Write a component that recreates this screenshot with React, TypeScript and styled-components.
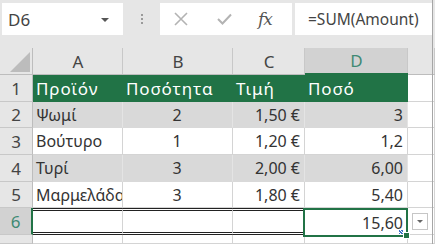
import React from "react";
import styled, { createGlobalStyle, css } from "styled-components";

const GlobalStyle = createGlobalStyle`
  html, body { margin: 0; padding: 0; background: #e6e6e6; }
  body { font-family: "Noto Sans", "Open Sans", sans-serif; }
`;

const Frame = styled.div`
  width: 435px;
  height: 244px;
  overflow: hidden;
  background: #e6e6e6;
  display: flex;
  flex-direction: column;
  position: relative;
`;

const TopBar = styled.div`
  height: 48px;
  flex: none;
  display: flex;
  align-items: flex-start;
  padding: 3px 0 0 2px;
  box-sizing: border-box;
`;

const NameBox = styled.div`
  width: 121px;
  height: 32px;
  background: #fff;
  display: flex;
  align-items: center;
  justify-content: space-between;
  padding: 0 14px 0 6px;
  box-sizing: border-box;
  font-size: 17px;
  color: #444;
`;

const Caret = styled.span`
  width: 0;
  height: 0;
  border-left: 4px solid transparent;
  border-right: 4px solid transparent;
  border-top: 4px solid #555;
  margin-top: 2px;
`;

const Grip = styled.div`
  width: 37px;
  height: 32px;
  display: flex;
  flex-direction: column;
  align-items: center;
  justify-content: center;
  gap: 2px;
`;

const GripDot = styled.span`
  width: 2px;
  height: 2px;
  background: #9a9a9a;
`;

const FxBox = styled.div`
  width: 132px;
  height: 32px;
  background: #fff;
  display: flex;
  align-items: center;
  box-sizing: border-box;
  padding-left: 14px;
`;

const IconSlot = styled.div<{ $w: number }>`
  width: ${(p) => p.$w}px;
  display: flex;
  align-items: center;
  justify-content: flex-start;
`;

const FxText = styled.span`
  font-family: "DejaVu Serif", "Liberation Serif", serif;
  font-style: italic;
  font-size: 17px;
  color: #555;
  letter-spacing: -1px;
`;

const FormulaInput = styled.div`
  width: 137px;
  height: 32px;
  margin-left: 3px;
  background: #fff;
  display: flex;
  align-items: center;
  padding-left: 13px;
  box-sizing: border-box;
  font-size: 15.5px;
  color: #444;
  white-space: nowrap;
  overflow: hidden;
`;

const Sheet = styled.div`
  flex: 1;
  display: grid;
  grid-template-columns: 33px 90px 110px 72px 103px 1fr;
  grid-template-rows: 27px 27px 26px 27px 27px 26px 27px 1fr;
  background: #fff;
  position: relative;
`;

const Corner = styled.div`
  background: #e6e6e6;
  border-bottom: 1px solid #bdbdbd;
  border-right: 1px solid #bdbdbd;
  position: relative;
  box-sizing: border-box;
`;

const CornerTri = styled.div`
  position: absolute;
  right: 2px;
  bottom: 2px;
  width: 0;
  height: 0;
  border-left: 20px solid transparent;
  border-bottom: 20px solid #bcbcbc;
`;

const ColHead = styled.div<{ $sel?: boolean }>`
  background: ${(p) => (p.$sel ? "#d2d2d2" : "#e6e6e6")};
  border-bottom: ${(p) => (p.$sel ? "2px solid #217346" : "1px solid #bdbdbd")};
  box-sizing: border-box;
  display: flex;
  align-items: center;
  justify-content: center;
  font-size: 17px;
  color: ${(p) => (p.$sel ? "#3f8a74" : "#444")};
  position: relative;
  &::after {
    content: "";
    position: absolute;
    right: 0;
    top: 0;
    bottom: 0;
    width: 1px;
    background: #c8c8c8;
  }
`;

const RowHead = styled.div<{ $sel?: boolean }>`
  background: ${(p) => (p.$sel ? "#d2d2d2" : "#e6e6e6")};
  border-bottom: 1px solid #c8c8c8;
  border-right: ${(p) => (p.$sel ? "2px solid #217346" : "1px solid #bdbdbd")};
  box-sizing: border-box;
  display: flex;
  align-items: center;
  justify-content: center;
  font-size: 17px;
  color: ${(p) => (p.$sel ? "#3f8a74" : "#444")};
`;

type Variant = "green" | "band" | "plain" | "total";

const Cell = styled.div<{ $v: Variant; $align?: "left" | "center" | "right" }>`
  box-sizing: border-box;
  display: flex;
  align-items: center;
  padding: 0 4px 0 3px;
  font-size: 16px;
  white-space: nowrap;
  overflow: hidden;
  justify-content: ${(p) =>
    p.$align === "right" ? "flex-end" : p.$align === "center" ? "center" : "flex-start"};
  ${(p) =>
    p.$v === "green"
      ? css`
          background: #217346;
          color: #fff;
          font-size: 17px;
          letter-spacing: 0.9px;
          border-bottom: 1px solid #217346;
        `
      : p.$v === "band"
      ? css`
          background: #d9d9d9;
          color: #333;
          border-right: 1px solid #e4e4e4;
          border-bottom: 1px solid #d9d9d9;
        `
      : p.$v === "total"
      ? css`
          background: #fff;
          color: #333;
          border-top: 3px double #222;
          border-bottom: 3px double #222;
          border-right: 1px solid #d4d4d4;
        `
      : css`
          background: #fff;
          color: #333;
          border-right: 1px solid #d4d4d4;
          border-bottom: 1px solid #d4d4d4;
        `}
`;

const ActiveCell = styled.div`
  box-sizing: border-box;
  border: 2px solid #217346;
  display: flex;
  align-items: center;
  justify-content: flex-end;
  padding: 0 3px 0 3px;
  font-size: 16px;
  color: #333;
  position: relative;
  margin-left: -2px;
  margin-bottom: -2px;
`;

const FillHandle = styled.div`
  position: absolute;
  right: -4px;
  bottom: -4px;
  width: 5px;
  height: 5px;
  background: #217346;
  border: 1px solid #fff;
`;

const FillDots = styled.div`
  position: absolute;
  right: 3px;
  bottom: 1px;
  width: 4px;
  height: 4px;
  background: repeating-linear-gradient(45deg, #3a6fc4 0 1px, transparent 1px 2px);
`;

const AutoFill = styled.div`
  position: absolute;
  left: 412px;
  top: 165px;
  width: 16px;
  height: 17px;
  background: #fff;
  border: 1px solid #c6c6c6;
  box-sizing: border-box;
  display: flex;
  align-items: center;
  justify-content: center;
`;

const SmallCaret = styled.span`
  width: 0;
  height: 0;
  border-left: 3px solid transparent;
  border-right: 3px solid transparent;
  border-top: 3px solid #666;
`;

const EdgeLine = styled.div`
  position: absolute;
  right: 2px;
  top: 0;
  bottom: 0;
  width: 1px;
  background: #a6a6a6;
`;

const rows: { n: number; v: Variant; cells: string[] }[] = [
  { n: 1, v: "green", cells: ["Προϊόν", "Ποσότητα", "Τιμή", "Ποσό"] },
  { n: 2, v: "band", cells: ["Ψωμί", "2", "1,50 €", "3"] },
  { n: 3, v: "plain", cells: ["Βούτυρο", "1", "1,20 €", "1,2"] },
  { n: 4, v: "band", cells: ["Τυρί", "3", "2,00 €", "6,00"] },
  { n: 5, v: "plain", cells: ["Μαρμελάδα", "3", "1,80 €", "5,40"] },
];

const XIcon = () => (
  <svg width="14" height="14" viewBox="0 0 14 14">
    <path d="M1 1 L13 13 M13 1 L1 13" stroke="#b3b3b3" strokeWidth="1.6" fill="none" />
  </svg>
);

const CheckIcon = () => (
  <svg width="15" height="12" viewBox="0 0 15 12">
    <path d="M1 6 L5.5 10.5 L14 1.5" stroke="#b3b3b3" strokeWidth="2" fill="none" />
  </svg>
);

export default function App() {
  const align = (i: number, v: Variant): "left" | "center" | "right" => {
    if (v === "green") return "left";
    if (i === 0) return "left";
    if (i === 1) return "center";
    return "right";
  };
  return (
    <>
      <GlobalStyle />
      <Frame>
        <TopBar>
          <NameBox>
            D6
            <Caret />
          </NameBox>
          <Grip>
            <GripDot />
            <GripDot />
            <GripDot />
          </Grip>
          <FxBox>
            <IconSlot $w={43}>
              <XIcon />
            </IconSlot>
            <IconSlot $w={41}>
              <CheckIcon />
            </IconSlot>
            <IconSlot $w={24}>
              <FxText>fx</FxText>
            </IconSlot>
          </FxBox>
          <FormulaInput>=SUM(Amount)</FormulaInput>
        </TopBar>
        <Sheet>
          <Corner>
            <CornerTri />
          </Corner>
          <ColHead>A</ColHead>
          <ColHead>B</ColHead>
          <ColHead>C</ColHead>
          <ColHead $sel>D</ColHead>
          <ColHead />
          {rows.map((r) => (
            <React.Fragment key={r.n}>
              <RowHead>{r.n}</RowHead>
              {r.cells.map((c, i) => (
                <Cell key={i} $v={r.v} $align={align(i, r.v)}>
                  {c}
                </Cell>
              ))}
              <Cell $v="plain" />
            </React.Fragment>
          ))}
          <RowHead $sel>6</RowHead>
          <Cell $v="total" />
          <Cell $v="total" />
          <Cell $v="total" />
          <ActiveCell>
            15,60
            <FillDots />
            <FillHandle />
          </ActiveCell>
          <Cell $v="plain" />
          <RowHead />
          <Cell $v="plain" />
          <Cell $v="plain" />
          <Cell $v="plain" />
          <Cell $v="plain" />
          <Cell $v="plain" />
          <AutoFill>
            <SmallCaret />
          </AutoFill>
        </Sheet>
        <EdgeLine />
      </Frame>
    </>
  );
}
